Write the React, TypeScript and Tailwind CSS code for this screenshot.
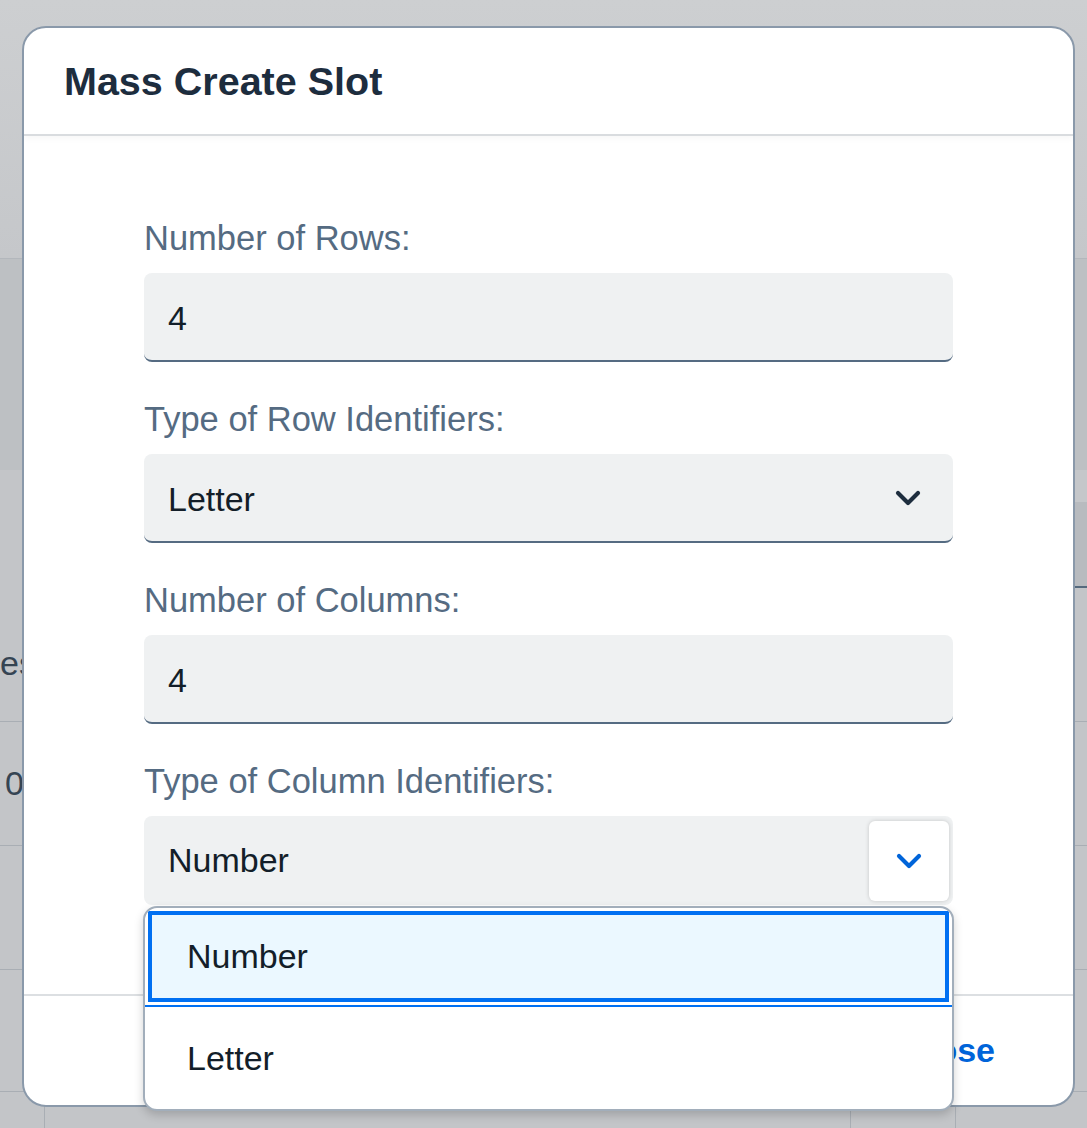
import React from 'react';

const font = { fontFamily: '"Liberation Sans", Arial, sans-serif' };

function Chevron({ className }: { className: string }) {
  return (
    <svg viewBox="0 0 26 16" className={className} fill="none">
      <path d="M3 3 L13 13 L23 3" stroke="currentColor" strokeWidth="4.2" strokeLinecap="round" strokeLinejoin="round" />
    </svg>
  );
}

function Field({ label, value, select }: { label: string; value: string; select?: boolean }) {
  return (
    <div className="flex flex-col gap-[15px]">
      <label className="h-[40px] leading-[40px] text-[34.5px] text-[#556b82]">{label}</label>
      <div className="h-[89px] rounded-[8px] bg-[#eff1f2] border-b-2 border-[#556b82] flex items-center justify-between pl-[24px] pr-[32px]">
        <span className="text-[34px] text-[#131e29] translate-y-[2px]">{value}</span>
        {select && <Chevron className="w-[26px] h-[16px] text-[#1d2d3e]" />}
      </div>
    </div>
  );
}

function Background() {
  return (
    <div className="flex flex-col h-full">
      <div className="h-[258px] bg-gradient-to-b from-[#cdcfd1] to-[#c5c7ca]" />
      <div className="h-[212px] bg-[#bdc0c3] border-t border-[#b3b7bc]" />
      <div className="flex flex-1">
        <div className="w-[540px] flex flex-col">
          <div className="h-[252px] bg-[#c3c5c8] border-b border-[#a9aeb4] flex items-end pb-[32px]">
            <span className="text-[34px] text-[#354453]">es</span>
          </div>
          <div className="h-[124px] bg-[#c3c5c8] border-b border-[#a9aeb4] flex items-center">
            <span className="ml-[5px] text-[34px] text-[#354453]">0</span>
          </div>
          <div className="h-[124px] bg-[#c3c5c8] border-b border-[#a9aeb4]" />
          <div className="h-[122px] bg-[#c3c5c8] border-b border-[#a9aeb4]" />
          <div className="flex-1 bg-[#c3c5c8] flex">
            <div className="w-[45px] border-r border-[#a9aeb4]" />
          </div>
        </div>
        <div className="flex-1 flex flex-col">
          <div className="h-[32px] bg-[#c5c7ca]" />
          <div className="h-[86px] bg-[#b8bbbf] border-b-2 border-[#55697d]" />
          <div className="h-[134px] bg-[#c3c5c8] border-b border-[#a9aeb4]" />
          <div className="h-[124px] bg-[#c3c5c8] border-b border-[#a9aeb4]" />
          <div className="h-[124px] bg-[#c3c5c8] border-b border-[#a9aeb4]" />
          <div className="h-[122px] bg-[#c3c5c8] border-b border-[#a9aeb4]" />
          <div className="flex-1 bg-[#c3c5c8] flex">
            <div className="w-[311px] border-r border-[#a9aeb4]" />
            <div className="w-[105px] border-r border-[#a9aeb4]" />
          </div>
        </div>
      </div>
    </div>
  );
}

export default function App() {
  return (
    <div className="relative w-[1087px] h-[1128px] overflow-hidden" style={font}>
      <Background />

      <div className="absolute left-[22px] top-[26px] w-[1053px] h-[1081px] rounded-[24px] border-2 border-[#8a99aa] bg-white flex flex-col overflow-hidden">
        <div className="h-[108px] shrink-0 flex items-center px-[40px] border-b-2 border-[#d9dcdf] shadow-[0_3px_6px_rgba(0,0,0,0.03)]">
          <h1 className="text-[39.5px] font-bold text-[#1d2d3e] translate-y-[1px]">Mass Create Slot</h1>
        </div>

        <div className="flex-1 px-[120px] pt-[82px] flex flex-col gap-[37px]">
          <Field label="Number of Rows:" value="4" />
          <Field label="Type of Row Identifiers:" value="Letter" select />
          <Field label="Number of Columns:" value="4" />
          <div className="flex flex-col gap-[15px]">
            <label className="h-[40px] leading-[40px] text-[34.5px] text-[#556b82]">Type of Column Identifiers:</label>
            <div className="h-[89px] rounded-[8px] bg-[#eff1f2] flex items-center justify-between pl-[24px] pr-[4px]">
              <span className="text-[34px] text-[#131e29]">Number</span>
              <div className="w-[80px] h-[80px] rounded-[6px] bg-white shadow-[0_0_4px_rgba(0,0,0,0.18)] flex items-center justify-center">
                <Chevron className="w-[26px] h-[16px] text-[#0064d9]" />
              </div>
            </div>
          </div>
        </div>

        <div className="h-[111px] shrink-0 border-t-2 border-[#dcdfe2] flex items-center justify-end pr-[78px]">
          <button className="text-[34px] font-bold text-[#0064d9]">Close</button>
        </div>
      </div>

      <div className="absolute left-[143px] top-[906px] w-[811px] h-[205px] rounded-[14px] border-2 border-[#a2aebb] bg-white shadow-[0_4px_10px_rgba(0,0,0,0.18)] flex flex-col pt-[3px] overflow-hidden">
        <div className="mx-[3px] h-[91px] border-4 border-[#0070f2] bg-[#ebf8ff] flex items-center pl-[35px] text-[34px] text-[#131e29]">
          Number
        </div>
        <div className="mt-[3px] h-[2px] bg-[#0070f2]" />
        <div className="flex-1 flex items-center pl-[42px] text-[34px] text-[#131e29]">Letter</div>
      </div>
    </div>
  );
}
